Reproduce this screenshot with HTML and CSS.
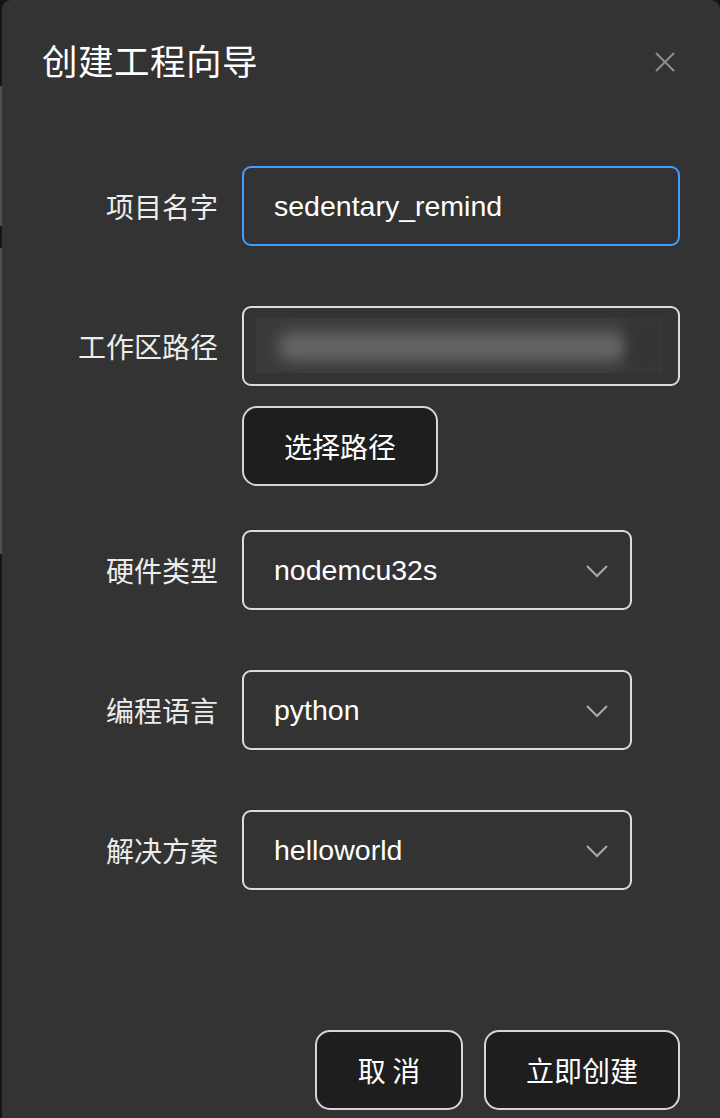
FILE: index.html
```html
<!DOCTYPE html>
<html lang="zh-CN">
<head>
<meta charset="utf-8">
<title>创建工程向导</title>
<link rel="stylesheet" href="styles.css">
</head>
<body>
<div class="edge"><span class="seg seg-a"></span><span class="seg seg-b"></span></div>
<div class="dialog">
  <div class="header">
    <h1 class="title">创建工程向导</h1>
    <button class="close" aria-label="关闭">
      <svg width="20" height="20" viewBox="0 0 20 20"><path d="M1 1 L19 19 M19 1 L1 19" stroke="#8e8e8e" stroke-width="2" fill="none"/></svg>
    </button>
  </div>
  <div class="form">
    <div class="row">
      <label class="label">项目名字</label>
      <div class="field field-text field-focus">sedentary_remind</div>
    </div>
    <div class="row row-path">
      <label class="label">工作区路径</label>
      <div class="field field-text field-blur"><div class="blur-box"><div class="blur-ink"></div><div class="blur-dark"></div></div></div>
    </div>
    <div class="row row-btn">
      <span class="label"></span>
      <button class="btn btn-path">选择路径</button>
    </div>
    <div class="row">
      <label class="label">硬件类型</label>
      <div class="field field-select">nodemcu32s<svg class="chev" width="22" height="13" viewBox="0 0 22 13"><path d="M1 1 L11 11 L21 1" stroke="#a8abb0" stroke-width="2" fill="none"/></svg></div>
    </div>
    <div class="row">
      <label class="label">编程语言</label>
      <div class="field field-select">python<svg class="chev" width="22" height="13" viewBox="0 0 22 13"><path d="M1 1 L11 11 L21 1" stroke="#a8abb0" stroke-width="2" fill="none"/></svg></div>
    </div>
    <div class="row">
      <label class="label">解决方案</label>
      <div class="field field-select">helloworld<svg class="chev" width="22" height="13" viewBox="0 0 22 13"><path d="M1 1 L11 11 L21 1" stroke="#a8abb0" stroke-width="2" fill="none"/></svg></div>
    </div>
  </div>
  <div class="footer">
    <button class="btn btn-cancel">取 消</button>
    <button class="btn btn-create">立即创建</button>
  </div>
</div>
</body>
</html>
```

FILE: styles.css
```css
html, body {
  margin: 0;
  padding: 0;
}
body {
  background: #151515;
  width: 720px;
  height: 1118px;
  overflow: hidden;
  position: relative;
  font-family: "Liberation Sans", "Noto Sans CJK SC", sans-serif;
  color: #f2f2f2;
}
.edge {
  position: absolute;
  left: 0;
  top: 0;
  width: 2px;
  height: 1118px;
}
.seg {
  position: absolute;
  left: 0;
  width: 2px;
  background: #4b5057;
}
.seg-a { top: 86px; height: 140px; }
.seg-b { top: 248px; height: 306px; }
.dialog {
  margin-left: 2px;
  width: 718px;
  height: 1140px;
  background: #333333;
  border-radius: 9px 9px 0 0;
  box-sizing: border-box;
  position: relative;
}
.header {
  height: 124px;
  display: flex;
  align-items: center;
  justify-content: space-between;
  padding: 0 45px 4px 40px;
  box-sizing: border-box;
}
.title {
  margin: 0;
  font-family: "Noto Sans CJK SC", sans-serif;
  font-size: 35.5px;
  font-weight: 400;
  letter-spacing: 0.5px;
  color: #ffffff;
  line-height: 1;
}
.close {
  background: none;
  border: none;
  padding: 0;
  width: 20px;
  height: 20px;
  margin-top: 4px;
  display: flex;
}
.form {
  padding-top: 42px;
  display: flex;
  flex-direction: column;
}
.row {
  display: flex;
  align-items: center;
  gap: 24px;
  margin-bottom: 60px;
}
.row-path { margin-bottom: 20px; }
.row-btn { margin-bottom: 44px; }
.label {
  width: 216px;
  flex: none;
  text-align: right;
  font-family: "Noto Sans CJK SC", sans-serif;
  font-size: 28px;
  color: #ededed;
}
.field {
  height: 80px;
  box-sizing: border-box;
  border: 2px solid #d9dce1;
  border-radius: 9px;
  display: flex;
  align-items: center;
  padding-left: 30px;
  font-size: 28.5px;
  color: #ffffff;
}
.field-text { width: 438px; }
.field-focus { border-color: #409eff; }
.field-blur {
  padding: 10px 16px 11px 12px;
}
.blur-box {
  width: 100%;
  height: 100%;
  background: #3a3a3a;
  overflow: hidden;
  position: relative;
}
.blur-ink {
  position: absolute;
  left: 22px;
  right: 34px;
  top: 14px;
  bottom: 12px;
  background: #666666;
  border-radius: 14px;
  filter: blur(8px);
}
.blur-dark {
  position: absolute;
  right: 0;
  top: 0;
  width: 34px;
  height: 100%;
  background: #343434;
  filter: blur(6px);
}
.field-select {
  width: 390px;
  justify-content: space-between;
  padding-right: 22px;
}
.chev { flex: none; margin-top: 2px; }
.btn {
  height: 80px;
  box-sizing: border-box;
  background: #1e1e1e;
  border: 2px solid #d3d6da;
  border-radius: 15px;
  color: #ffffff;
  font-family: "Noto Sans CJK SC", sans-serif;
  font-size: 28px;
  padding: 0;
  display: flex;
  align-items: center;
  justify-content: center;
}
.btn-path { width: 196px; }
.footer {
  position: absolute;
  right: 40px;
  top: 1030px;
  display: flex;
  gap: 21px;
}
.btn-cancel { width: 148px; }
.btn-create { width: 196px; }
```
